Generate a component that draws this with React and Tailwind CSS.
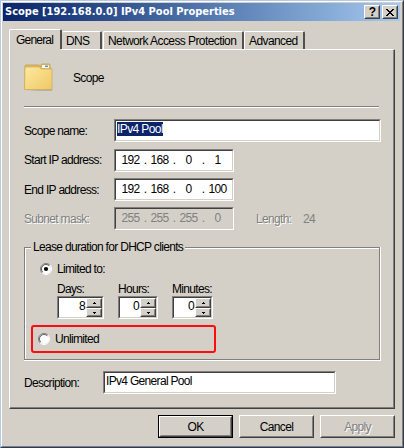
const font = "font-['Liberation_Sans',Arial,sans-serif]";
const sunken = "border border-t-[#808080] border-l-[#808080] border-r-white border-b-white";
const sunkenInner = "h-full border border-t-[#404040] border-l-[#404040] border-r-[#d4d0c8] border-b-[#d4d0c8]";
const raised = "border border-t-white border-l-white border-r-[#404040] border-b-[#404040]";
const raisedInner = "h-full w-full border border-t-[#d4d0c8] border-l-[#d4d0c8] border-r-[#808080] border-b-[#808080] flex items-center justify-center";

function Field({ className, disabled, children }) {
  return (
    <div className={`${sunken} ${className}`}>
      <div className={`${sunkenInner} ${disabled ? "bg-[#d4d0c8] text-[#808080]" : "bg-white"} flex`}>{children}</div>
    </div>
  );
}

function IpField({ parts, disabled }) {
  return (
    <Field className="h-[23px] w-[120px]" disabled={disabled}>
      <div className="ml-[2px] flex h-[18px] items-center tracking-[-0.6px]">
        {parts.map((p, i) => (
          <div key={i} className="flex">
            <span className="w-[25px] text-center">{p}</span>
            {i < 3 && <span className="w-[4px] text-center">.</span>}
          </div>
        ))}
      </div>
    </Field>
  );
}

function Arrow({ down }) {
  return (
    <svg width="3" height="2" viewBox="0 0 3 2" shapeRendering="crispEdges">
      <path d={down ? "M0 0h3v1H2v1H1V1H0z" : "M1 0h1v1h1v1H0V1h1z"} fill="#000" />
    </svg>
  );
}

function Spinner({ label, value, width }) {
  return (
    <div className={width}>
      <div className="h-[14px] whitespace-nowrap leading-[14px]">{label}</div>
      <Field className="h-[23px]">
        <div className="flex-1 pr-px text-right leading-[17px]">{value}</div>
        <div className="flex w-[16px] flex-col bg-[#d4d0c8]">
          <div className={`h-[10px] ${raised}`}><div className={raisedInner}><Arrow /></div></div>
          <div className={`h-[9px] ${raised}`}><div className={raisedInner}><Arrow down /></div></div>
        </div>
      </Field>
    </div>
  );
}

function Radio({ checked }) {
  return (
    <svg width="12" height="12" viewBox="0 0 12 12">
      <circle cx="6" cy="6" r="5" fill="#fff" />
      <path d="M2.1 9.9A5.5 5.5 0 0 1 9.9 2.1" fill="none" stroke="#808080" />
      <path d="M2.8 9.2A4.5 4.5 0 0 1 9.2 2.8" fill="none" stroke="#505050" strokeWidth=".9" />
      <path d="M9.9 2.1A5.5 5.5 0 0 1 2.1 9.9" fill="none" stroke="#fff" />
      {checked && <circle cx="6" cy="6" r="2.1" fill="#000" />}
    </svg>
  );
}

function Folder() {
  return (
    <svg width="30" height="29" viewBox="0 0 30 29">
      <defs>
        <linearGradient id="front" x1="0" y1="0" x2="1" y2="1">
          <stop offset="0" stopColor="#fde9a0" />
          <stop offset="1" stopColor="#efc865" />
        </linearGradient>
      </defs>
      <path d="M2 28h26V6l-1 20z" fill="#aaa593" opacity=".7" />
      <path d="M1 3q0-1 1-1h13l2 2V2q0-1 1-1h7q1 0 1 1v3l1.5 1v20H1z" fill="#e3bf63" stroke="#b99745" strokeWidth=".7" />
      <path d="M18 2h7v3h-7z" fill="#f7f7ef" />
      <path d="M21 2.5h3v1.5h-3z" fill="#5b8fca" />
      <path d="M1 4h14l2 2h11v20.5H.5z" fill="url(#front)" stroke="#cfa853" strokeWidth=".7" />
    </svg>
  );
}

function Button({ label, primary, disabled }) {
  const text = disabled ? "text-[#808080] [text-shadow:1px_1px_0_#fff]" : "";
  return (
    <div className={`h-[23px] w-[75px] ${primary ? "border border-black" : ""}`}>
      <div className={`h-full w-full ${raised}`}>
        <div className={`${raisedInner} ${text}`}>{label}</div>
      </div>
    </div>
  );
}

function Tab({ label, className, labelClass }) {
  return (
    <div className={`rounded-t-[2px] border-t border-l border-t-white border-l-white border-r-2 border-r-[#505050] whitespace-nowrap ${className}`}>
      <span className={labelClass}>{label}</span>
    </div>
  );
}

export default function App() {
  return (
    <div className={`h-[448px] w-[404px] overflow-hidden border-t border-l border-r border-b border-t-[#b5cbe3] border-l-[#b5cbe3] border-r-[#2f3c4c] border-b-[#2c3a5c] bg-[#d4d0c8] text-[12px] leading-[18px] tracking-[-0.68px] text-black ${font}`}>
      <div className="flex h-[446px] w-[402px] flex-col border border-t-white border-l-white border-r-[#808080] border-b-[#808080]">
        <div className="mt-px ml-px flex h-[18px] w-[397px] items-center justify-between bg-linear-to-r from-[#0a246a] to-[#a6caf0] pr-[2px] pl-[2px]">
          <div className="whitespace-nowrap font-['DejaVu_Sans_Condensed','DejaVu_Sans',sans-serif] text-[11px] font-bold tracking-[0px] text-white">Scope [192.168.0.0] IPv4 Pool Properties</div>
          <div className="flex gap-[2px]">
            <div className={`h-[14px] w-[16px] bg-[#d4d0c8] ${raised}`}><div className={`${raisedInner} text-[12px] font-bold leading-none`}>?</div></div>
            <div className={`h-[14px] w-[16px] bg-[#d4d0c8] ${raised}`}><div className={raisedInner}>
              <svg width="8" height="7" viewBox="0 0 8 7" shapeRendering="crispEdges"><path d="M0 0h2v1h1v1h2V1h1V0h2v1H7v1H6v1H5v1h1v1h1v1h1v1H6V6H5V5H3v1H2v1H0V6h1V5h1V4h1V3H2V2H1V1H0z" fill="#000" /></svg>
            </div></div>
          </div>
        </div>

        <div className="ml-[7px] mt-[8px] flex h-[20px] items-end">
          <Tab label="General" className="h-[20px] w-[53px] pt-px pl-[6px]" labelClass="tracking-[-0.8px]" />
          <Tab label="DNS" className="h-[18px] w-[40px] border-l-0 pl-[4px]" />
          <Tab label="Network Access Protection" className="ml-px h-[18px] w-[141px] pl-[4px]" labelClass="tracking-[-0.58px]" />
          <Tab label="Advanced" className="h-[18px] w-[61px] pl-[4px]" labelClass="tracking-[-0.6px]" />
        </div>
        <div className="relative ml-[7px] h-[360px] w-[386px] border border-t-white border-l-white border-r-[#404040] border-b-[#404040]">
          <div className="absolute -top-px left-0 h-px w-[51px] bg-[#d4d0c8]" />
          <div className="flex h-full flex-col border-r border-b border-[#808080] pl-[14px]">
            <div className="flex h-[56px] pt-[13px]">
              <Folder />
              <span className="ml-[19px] mt-[6px]">Scope</span>
            </div>
            <div className="h-[2px] w-[355px] border-t border-t-[#808080] border-b border-b-white" />
            <div className="mt-[11px] flex">
              <span className="w-[90px] pt-[3px]">Scope name:</span>
              <Field className="h-[23px] w-[267px]"><span className="mt-px ml-px h-[14px] bg-[#0a246a] leading-[14px] tracking-[-0.6px] text-white">IPv4 Pool</span></Field>
            </div>
            <div className="mt-[7px] flex">
              <span className="w-[90px] pt-[2px]">Start IP address:</span>
              <IpField parts={["192", "168", "0", "1"]} />
            </div>
            <div className="mt-[6px] flex">
              <span className="w-[90px] pt-[3px]">End IP address:</span>
              <IpField parts={["192", "168", "0", "100"]} />
            </div>
            <div className="mt-[6px] flex">
              <span className="w-[90px] pt-[3px] text-[#808080] [text-shadow:1px_1px_0_#fff]">Subnet mask:</span>
              <IpField parts={["255", "255", "255", "0"]} disabled />
              <span className="w-[69px] pl-[22px] pt-[3px] text-[#808080] [text-shadow:1px_1px_0_#fff]">Length:</span>
              <span className="pt-[3px] text-[#808080]">24</span>
            </div>

            <div className="relative mt-[17px] h-[114px] w-[357px] border-r border-b border-white">
              <div className="h-full border border-[#808080] shadow-[inset_1px_1px_0_#fff]">
                <span className="absolute -top-[8px] left-[7px] bg-[#d4d0c8] px-[2px] leading-[16px]">Lease duration for DHCP clients</span>
                <div className="flex items-center pt-[13px] pl-[15px] leading-[16px]">
                  <Radio checked />
                  <span className="ml-[5px]">Limited to:</span>
                </div>
                <div className="mt-[5px] ml-[32px] flex">
                  <Spinner label="Days:" value="8" width="w-[47px]" />
                  <div className="w-[14px]" />
                  <Spinner label="Hours:" value="0" width="w-[40px]" />
                  <div className="w-[14px]" />
                  <Spinner label="Minutes:" value="0" width="w-[41px]" />
                </div>
                <div className="mt-[6px] ml-[6px] flex h-[28px] w-[185px] items-center rounded-[3px] border-2 border-[#fb0d0d] pl-[5px]">
                  <Radio />
                  <span className="ml-[5px]">Unlimited</span>
                </div>
              </div>
            </div>

            <div className="mt-[10px] flex">
              <span className="w-[79px] pt-[3px]">Description:</span>
              <Field className="h-[23px] w-[233px]"><span className="pl-px leading-[17px]">IPv4 General Pool</span></Field>
            </div>
          </div>
        </div>
        <div className="mt-[6px] flex justify-end gap-[6px] pr-[7px]">
          <Button label="OK" primary />
          <Button label="Cancel" />
          <Button label="Apply" disabled />
        </div>
      </div>
    </div>
  );
}
